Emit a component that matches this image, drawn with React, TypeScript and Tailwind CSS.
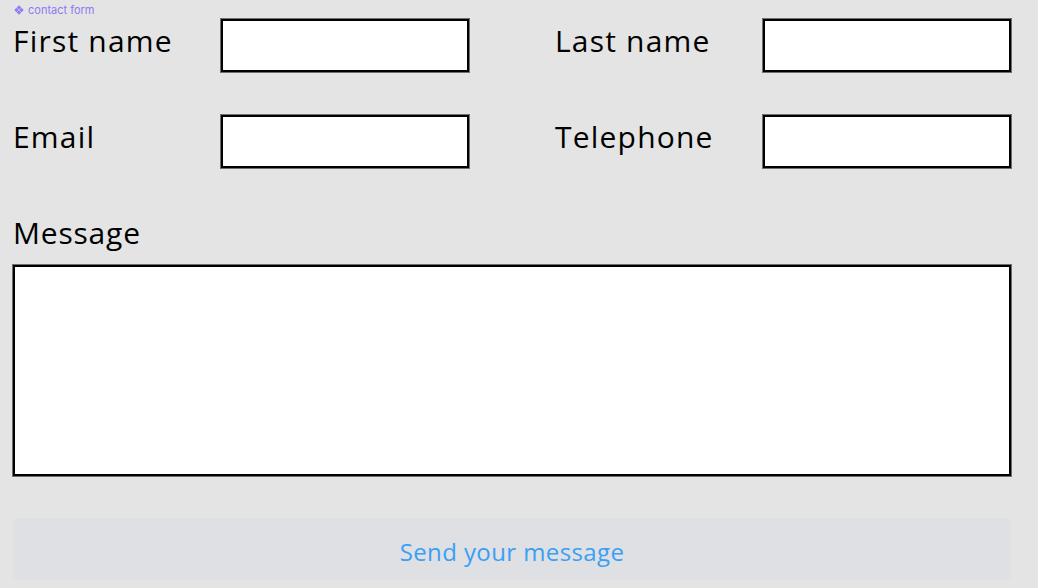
import React from "react";

const fieldLabel = "w-[208px] shrink-0 pb-[9px] text-[30px] leading-none text-black tracking-[1.2px]";
const boxCls =
  "h-[53px] w-[248px] shrink-0 border-2 border-black bg-white shadow-[0_0_0_1px_#6f6f6f] outline-none";

function Field({ label, type = "text" }: { label: string; type?: string }) {
  return (
    <label className="flex w-[456px] items-center">
      <span className={fieldLabel}>{label}</span>
      <input type={type} className={boxCls} />
    </label>
  );
}

export default function App() {
  return (
    <div
      className="min-h-[588px] w-[1038px] bg-[#e4e4e4] px-[13px] pt-[4px]"
      style={{ fontFamily: '"Open Sans", "DejaVu Sans", sans-serif' }}
    >
      <div className="flex h-[12px] items-center gap-[4px] pl-[1px] text-[11px] leading-none text-[#8b7bf5] font-['Inter',sans-serif]">
        <svg width="10" height="10" viewBox="0 0 10 10" fill="#8b7bf5">
          <path d="M5 0.3 L7.2 2.5 L5 4.7 L2.8 2.5 Z" />
          <path d="M5 5.3 L7.2 7.5 L5 9.7 L2.8 7.5 Z" />
          <path d="M0.3 5 L2.5 2.8 L4.7 5 L2.5 7.2 Z" />
          <path d="M5.3 5 L7.5 2.8 L9.7 5 L7.5 7.2 Z" />
        </svg>
        <span>contact form</span>
      </div>

      <form className="mt-[3px] w-[998px]" onSubmit={(e) => e.preventDefault()}>
        <div className="flex justify-between">
          <Field label="First name" />
          <Field label="Last name" />
        </div>
        <div className="mt-[43px] flex justify-between">
          <Field label="Email" type="email" />
          <Field label="Telephone" type="tel" />
        </div>

        <div className="mt-[50px] text-[30px] leading-none tracking-[0.8px] text-black">Message</div>
        <textarea className="mt-[17px] block h-[211px] w-full resize-none border-2 border-black bg-white shadow-[0_0_0_1px_#6f6f6f] outline-none" />

        <button
          type="submit"
          className="mt-[42px] block h-[62px] w-full rounded-md bg-[#dee0e4] pt-[6px] text-[24px] tracking-[0.4px] text-[#3a9ff5]"
        >
          Send your message
        </button>
      </form>
    </div>
  );
}
